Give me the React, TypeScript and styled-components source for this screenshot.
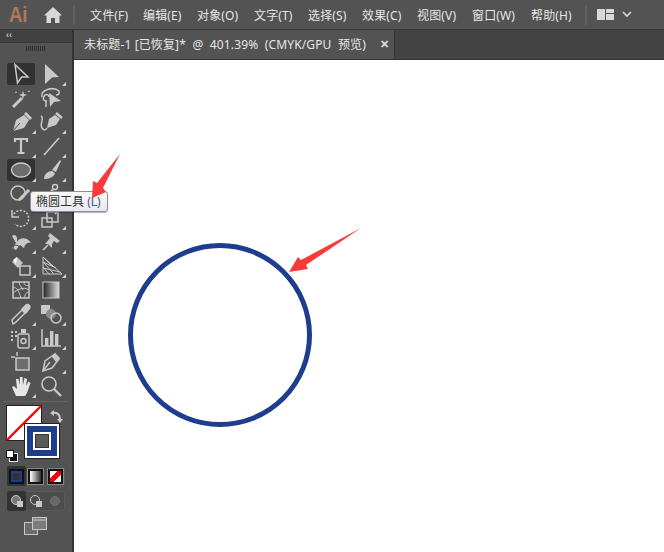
import styled, { createGlobalStyle } from "styled-components"
import { ReactNode } from "react"

const GlobalStyle = createGlobalStyle`
    html, body { margin: 0; padding: 0; background: #fff; }
    body { font-family: "Noto Sans", "Noto Sans CJK SC", "Liberation Sans", sans-serif; }
`

const Page = styled.div`
    position: relative;
    width: 664px;
    height: 552px;
    overflow: hidden;
    display: flex;
    flex-direction: column;
`

const TitleBar = styled.div`
    height: 30px;
    flex: none;
    box-sizing: border-box;
    background: #535353;
    border-bottom: 1px solid #3a3a3a;
    display: flex;
    align-items: center;
`

const Logo = styled.div`
    width: 43px;
    padding-left: 9px;
    box-sizing: border-box;
    color: #b07a58;
    font: 700 22px "Liberation Sans", sans-serif;
    transform-origin: 9px 50%;
    transform: scaleX(0.84);
`

const HomeIcon = styled.svg`
    margin-right: 10px;
`

const Divider = styled.div`
    width: 2px;
    height: 20px;
    background: #5f5f5f;
`

const MenuList = styled.div`
    display: flex;
    margin-left: 15px;
`

const MenuItem = styled.span<{ $width: number }>`
    width: ${p => p.$width}px;
    color: #e6e6e6;
    font-size: 12px;
    letter-spacing: 0.15px;
    white-space: nowrap;
`

const LayoutIcon = styled.svg`
    margin-left: 10px;
`

const ChevronIcon = styled.svg`
    margin-left: 8px;
`

const Body = styled.div`
    flex: 1;
    display: flex;
    min-height: 0;
`

const ToolPanel = styled.div`
    width: 74px;
    flex: none;
    box-sizing: border-box;
    background: #535353;
    border-right: 2px solid #333;
    display: flex;
    flex-direction: column;
`

const PanelHeader = styled.div`
    height: 13px;
    box-sizing: border-box;
    background: #414141;
    border-bottom: 1px solid #383838;
    padding-left: 6px;
    color: #c4c4c4;
    font: 700 9px/11px "Liberation Sans", sans-serif;
`

const Grip = styled.div`
    width: 19px;
    height: 5px;
    margin: 3px 0 11px 26px;
    background: repeating-linear-gradient(90deg, #2f2f2f 0 1px, #535353 1px 2px);
`

const ToolGrid = styled.div`
    display: grid;
    grid-template-columns: 30px 30px;
    grid-auto-rows: 24px;
    padding-left: 6px;
`

const Tool = styled.div<{ $active?: boolean; $corner?: boolean }>`
    position: relative;
    display: flex;
    align-items: center;
    justify-content: center;
    &::before {
        content: "";
        position: absolute;
        left: 1px;
        right: 1px;
        top: 1px;
        bottom: 1px;
        border-radius: 2px;
        background: ${p => (p.$active ? "#323232" : "transparent")};
    }
    &::after {
        content: "";
        display: ${p => (p.$corner ? "block" : "none")};
        position: absolute;
        right: 0;
        bottom: 0;
        border-style: solid;
        border-width: 0 0 4px 4px;
        border-color: transparent transparent #d0d0d0 transparent;
    }
    svg { position: relative; }
`

const PanelRule = styled.div`
    height: 1px;
    margin: 3px 4px 0;
    background: #646464;
`

const ColorArea = styled.div`
    position: relative;
    height: 56px;
    margin-top: 3px;
`

const FillSwatch = styled.div`
    position: absolute;
    left: 6px;
    top: 0;
    width: 36px;
    height: 36px;
`

const StrokeSwatch = styled.div`
    position: absolute;
    left: 25px;
    top: 19px;
    width: 30px;
    height: 30px;
    border: 2px solid #fff;
    outline: 1px solid #222;
    background: #1f3d8f;
    display: flex;
    align-items: center;
    justify-content: center;
`

const StrokeHole = styled.div`
    width: 14px;
    height: 14px;
    border: 2px solid #fff;
    box-shadow: inset 0 0 0 1px #333;
    background: #5a5a5a;
`

const SwapIcon = styled.div`
    position: absolute;
    left: 50px;
    top: 2px;
`

const DefaultIcon = styled.div`
    position: absolute;
    left: 6px;
    top: 40px;
`

const ButtonRow = styled.div<{ $top: number }>`
    display: flex;
    width: 58px;
    height: 20px;
    margin: ${p => p.$top}px 0 0 7px;
    border-radius: 3px;
    background: #4c4c4c;
    box-shadow: inset 0 0 0 1px #5a5a5a;
`

const RowCell = styled.div<{ $active?: boolean }>`
    flex: 1;
    display: flex;
    align-items: center;
    justify-content: center;
    border-radius: 2px;
    background: ${p => (p.$active ? "#333" : "transparent")};
`

const ModeSwatch = styled.div<{ $kind: "color" | "gradient" | "none" }>`
    width: 11px;
    height: 11px;
    border: 2px solid #111;
    background: ${p =>
        p.$kind === "color"
            ? "#333"
            : p.$kind === "gradient"
                ? "linear-gradient(90deg, #fff, #333)"
                : "linear-gradient(135deg, #fff 0 36%, #f00 36% 64%, #fff 64%)"};
    box-shadow: ${p => (p.$kind === "color" ? "inset 0 0 0 2px #1f3d8f" : "0 0 0 1px #888")};
`

const ScreenMode = styled.div`
    display: flex;
    justify-content: center;
    margin-top: 6px;
    margin-left: -1px;
`

const Main = styled.div`
    flex: 1;
    display: flex;
    flex-direction: column;
    min-width: 0;
`

const TabRow = styled.div`
    height: 30px;
    flex: none;
    box-sizing: border-box;
    background: #424242;
    border-bottom: 1px solid #333;
    display: flex;
`

const Tab = styled.div`
    width: 321px;
    box-sizing: border-box;
    padding: 0 0 0 10px;
    background: #535353;
    border-right: 1px solid #333;
    color: #e6e6e6;
    font-size: 12px;
    letter-spacing: 0.13px;
    line-height: 29px;
    display: flex;
    justify-content: space-between;
    white-space: pre;
`

const TabClose = styled.span`
    width: 14px;
    font: 700 11px/28px "Liberation Sans", sans-serif;
    color: #e0e0e0;
`

const Canvas = styled.div`
    position: relative;
    flex: 1;
    background: #fff;
`

const Ring = styled.div`
    position: absolute;
    left: 54px;
    top: 183px;
    width: 184px;
    height: 184px;
    box-sizing: border-box;
    border: 5px solid #1f3d8f;
    border-radius: 50%;
`

const Tooltip = styled.div`
    position: absolute;
    left: 30px;
    top: 191px;
    width: 78px;
    height: 21px;
    box-sizing: border-box;
    padding-left: 5px;
    border: 1px solid #8d8d99;
    border-radius: 3px;
    background: linear-gradient(#fafafa, #e8e8f0);
    color: #333;
    font-size: 12px;
    line-height: 19px;
    white-space: nowrap;
    box-shadow: 0 1px 1px rgba(0, 0, 0, 0.3);
`

const TooltipKey = styled.span`
    color: #44587f;
`

const Arrow = styled.svg<{ $left: number; $top: number }>`
    position: absolute;
    left: ${p => p.$left}px;
    top: ${p => p.$top}px;
`

const C = "#c9c9c9"

const line = { stroke: C, strokeWidth: 1.5, fill: "none" }

const tools: { icon: ReactNode; corner?: boolean; active?: boolean }[] = [
    { active: true, icon: <path d="M6 2.5 L19 15 L12.5 15 L8.5 21 Z" {...line} /> },
    { corner: true, icon: <path d="M6 2 L20 15 L13 15.5 L6 22 Z" fill={C} /> },
    { icon: <><path d="M4 21 L13 12" stroke={C} strokeWidth="3" /><path d="M14 5 L15 8 L18 9 L15 10 L14 13 L13 10 L10 9 L13 8 Z M7 5 L8 7 L6 7 Z M20 4 L21 6 L19 6 Z" fill={C} /></> },
    { icon: <><path d="M3 11 C1 4 14 0 20 5 C21 8 19 9 17 9 M8 15 C4 15 3 12 6 9 C8 8 10 9 10 11 M7 15 L7 21" {...line} /><path d="M10 7 L22 15 L15 16 L11 21 Z" fill={C} /></> },
    { corner: true, icon: <><path d="M4 21 L7 10 L15 5 L20 10 L15 18 Z" fill={C} /><path d="M16 3 L22 9" stroke={C} strokeWidth="3" /><path d="M4 21 L11 13" stroke="#535353" strokeWidth="1" /></> },
    { corner: true, icon: <><path d="M8 18 L10 9 L16 5 L21 9 L17 15 Z" fill={C} /><path d="M17 3 L23 8" stroke={C} strokeWidth="2.5" /><path d="M2 6 C6 8 0 14 3 18 C5 21 7 20 8 18" {...line} /></> },
    { corner: true, icon: <path d="M6 8 V5 H18 V8 M12 5 V19 M8.5 19 H15.5" stroke={C} strokeWidth="2.2" /> },
    { corner: true, icon: <path d="M5 21 L20 4" stroke={C} strokeWidth="1.6" /> },
    { corner: true, active: true, icon: <ellipse cx="12" cy="12" rx="9.5" ry="7" fill="#6d6d6d" stroke={C} strokeWidth="1.4" /> },
    { corner: true, icon: <><path d="M13 12 L21 2 L22 3 L17 14 Z" fill={C} /><path d="M5 21 C5 16 9 13 13 13 L16 15 C15 19 10 21 5 21 Z" fill={C} /></> },
    { corner: true, icon: <><circle cx="9" cy="11" r="7" {...line} /><path d="M10 18 L20 8" stroke={C} strokeWidth="3" /></> },
    { corner: true, icon: <><path d="M5 18 L14 8" stroke={C} strokeWidth="3" /><circle cx="16" cy="5" r="2.5" {...line} /></> },
    { corner: true, icon: <><path d="M5 8 A8 8 0 1 1 6 18" stroke={C} strokeWidth="1.5" strokeDasharray="2 1.5" /><path d="M3 4 L3 11 L10 11" stroke={C} strokeWidth="1.5" /></> },
    { corner: true, icon: <><rect x="3" y="12" width="10" height="9" {...line} /><rect x="8" y="6" width="11" height="10" {...line} /><path d="M16 8 L22 2 M18 2 L22 2 L22 6" {...line} /></> },
    { corner: true, icon: <><path d="M3 6 C7 3 9 8 8 12 C12 6 19 8 22 13 C18 12 16 14 15 18 L11 15 L7 20 L3 18 L7 13 Z" fill={C} /><circle cx="7" cy="18" r="3" stroke="#535353" /></> },
    { corner: true, icon: <><path d="M11 3 L21 11 L18 13 L15 11 L13 14 L13 18 L9 14 L6 14 L11 8 L9 6 Z" fill={C} /><path d="M9 15 L4 20" stroke={C} strokeWidth="1.6" /></> },
    { corner: true, icon: <><path d="M3 8 L8 3 L14 9 L9 14 Z" fill={C} /><path d="M4 6 L8 3 L7 10 Z" fill="#fff" /><rect x="11" y="12" width="10" height="9" {...line} /></> },
    { corner: true, icon: <path d="M4 3 L4 20 L23 20 L4 3 M4 8 L15 20 M4 13 L10 20 M4 3 L14 13 M4 8 L17 14 M4 14 L21 18" stroke={C} strokeWidth="1" /> },
    { icon: <><rect x="4" y="4" width="16" height="16" {...line} /><path d="M4 10 C8 8 10 14 12 20 M4 15 C8 12 14 8 20 12 M10 4 C10 8 14 10 14 12 M15 4 C15 8 18 8 20 7 M16 20 C15 16 18 14 20 14" stroke={C} strokeWidth="1" /></> },
    { icon: <><defs><linearGradient id="toolGrad"><stop offset="0" stopColor="#222" /><stop offset="1" stopColor="#ddd" /></linearGradient></defs><rect x="4" y="4" width="16" height="16" fill="url(#toolGrad)" stroke={C} /></> },
    { corner: true, icon: <><path d="M4 22 L3 18 L13 8 L16 11 L6 21 Z" {...line} /><path d="M12 7 L17 2 C20 1 23 4 21 7 L17 12 Z" fill={C} /></> },
    { corner: true, icon: <><rect x="2" y="3" width="9" height="9" fill={C} /><circle cx="12" cy="12" r="5" fill="#8a8a8a" /><circle cx="17" cy="16" r="5" {...line} /></> },
    { corner: true, icon: <><rect x="9" y="8" width="11" height="14" rx="1.5" {...line} /><circle cx="14.5" cy="15" r="2.5" {...line} /><rect x="12" y="3" width="5" height="4" fill={C} /><path d="M2 5 h2 v2 h-2z M6 5 h2 v2 h-2z M2 9 h2 v2 h-2z M6 9 h2 v2 h-2z M2 13 h2 v2 h-2z" fill={C} /></> },
    { corner: true, icon: <><path d="M3 3 L3 20 L22 20" {...line} /><rect x="6" y="12" width="3.4" height="8" fill={C} /><rect x="11" y="5" width="3.4" height="15" fill={C} /><rect x="16" y="8" width="3.4" height="12" fill={C} /></> },
    { icon: <><rect x="7" y="8" width="13" height="12" fill="#6d6d6d" stroke={C} strokeWidth="1.5" /><path d="M8 2 L8 6 M2 7 L6 7" stroke={C} strokeWidth="1.4" /></> },
    { corner: true, icon: <><path d="M4 21 L6 11 L16 4 L20 9 L13 18 Z" {...line} /><path d="M13 7 L16 3 L21 8 L17 12 Z" fill={C} /><path d="M4 21 L11 12" {...line} /></> },
    { corner: true, icon: <path d="M7 22 L3 13 L5 12 L8 15 L7 5 L9.5 5 L10.5 11 L11 3 L13.5 3 L14 11 L15.5 4 L18 5 L17 12 L19.5 7.5 L21.5 9 L18 19 L16 22 Z" fill="#e6e6e6" /> },
    { icon: <><circle cx="10" cy="10" r="7" stroke={C} strokeWidth="1.6" /><path d="M15 15 L22 22" stroke={C} strokeWidth="2.4" /></> },
]

function App(): JSX.Element {
    const menus: [string, number][] = [
        ["文件(F)", 53], ["编辑(E)", 54], ["对象(O)", 57], ["文字(T)", 54],
        ["选择(S)", 54], ["效果(C)", 55], ["视图(V)", 55], ["窗口(W)", 59], ["帮助(H)", 54],
    ]

    return (
        <Page>
            <GlobalStyle />
            <TitleBar>
                <Logo>Ai</Logo>
                <HomeIcon width="20" height="18" viewBox="0 0 20 18">
                    <path d="M10 1 L19 9.5 L16.5 9.5 L16.5 17 L12 17 L12 12 L8 12 L8 17 L3.5 17 L3.5 9.5 L1 9.5 Z" fill="#d8d8d8" />
                </HomeIcon>
                <Divider />
                <MenuList>
                    {menus.map(([label, width]) => <MenuItem key={label} $width={width}>{label}</MenuItem>)}
                </MenuList>
                <Divider />
                <LayoutIcon width="17" height="11" viewBox="0 0 17 11">
                    <path d="M0 0 H8 V11 H0 Z M9 0 H17 V4 H9 Z M9 5 H17 V11 H9 Z" fill="#d8d8d8" />
                </LayoutIcon>
                <ChevronIcon width="10" height="7" viewBox="0 0 10 7">
                    <path d="M1 1 L5 5 L9 1" stroke="#d8d8d8" strokeWidth="1.6" fill="none" />
                </ChevronIcon>
            </TitleBar>
            <Body>
                <ToolPanel>
                    <PanelHeader>‹‹</PanelHeader>
                    <Grip />
                    <ToolGrid>
                        {tools.map((t, i) => (
                            <Tool key={i} $active={t.active} $corner={t.corner}>
                                <svg width="24" height="24" viewBox="0 0 24 24" fill="none">{t.icon}</svg>
                            </Tool>
                        ))}
                    </ToolGrid>
                    <PanelRule />
                    <ColorArea>
                        <FillSwatch>
                            <svg width="36" height="36">
                                <rect x="0.5" y="0.5" width="35" height="35" fill="#fff" stroke="#222" />
                                <path d="M1 35 L35 1" stroke="#f00" strokeWidth="2.4" />
                            </svg>
                        </FillSwatch>
                        <StrokeSwatch><StrokeHole /></StrokeSwatch>
                        <SwapIcon>
                            <svg width="13" height="14" viewBox="0 0 13 14">
                                <path d="M2 3 C7 2 10 4 10 10" stroke={C} strokeWidth="2" fill="none" />
                                <path d="M4 0 L0 3 L4 6 Z M7 9 L13 9 L10 13 Z" fill={C} />
                            </svg>
                        </SwapIcon>
                        <DefaultIcon>
                            <svg width="12" height="12">
                                <rect x="3.5" y="3.5" width="8" height="8" fill="#111" stroke="#e8e8e8" />
                                <rect x="0.5" y="0.5" width="7" height="7" fill="#fff" stroke="#111" />
                            </svg>
                        </DefaultIcon>
                    </ColorArea>
                    <ButtonRow $top={5}>
                        <RowCell $active><ModeSwatch $kind="color" /></RowCell>
                        <RowCell><ModeSwatch $kind="gradient" /></RowCell>
                        <RowCell><ModeSwatch $kind="none" /></RowCell>
                    </ButtonRow>
                    <ButtonRow $top={5}>
                        <RowCell $active>
                            <svg width="14" height="14"><circle cx="6" cy="6" r="4.5" fill="#777" stroke={C} /><rect x="7" y="7" width="6" height="6" fill={C} /></svg>
                        </RowCell>
                        <RowCell>
                            <svg width="14" height="14"><circle cx="6" cy="6" r="4.5" fill="none" stroke={C} /><rect x="7" y="7" width="6" height="6" fill={C} /></svg>
                        </RowCell>
                        <RowCell>
                            <svg width="14" height="14"><circle cx="7" cy="7" r="4.5" fill="#666" stroke="#707070" /></svg>
                        </RowCell>
                    </ButtonRow>
                    <ScreenMode>
                        <svg width="23" height="18" viewBox="0 0 23 18">
                            <rect x="0.5" y="5.5" width="13" height="12" fill="#6c6c6c" stroke={C} />
                            <rect x="8.5" y="0.5" width="14" height="12" fill="#7c7c7c" stroke={C} />
                            <path d="M9 3 H22" stroke={C} />
                        </svg>
                    </ScreenMode>
                </ToolPanel>
                <Main>
                    <TabRow>
                        <Tab>
                            {"未标题-1 [已恢复]*  @  401.39%  (CMYK/GPU  预览)"}
                            <TabClose>✕</TabClose>
                        </Tab>
                    </TabRow>
                    <Canvas>
                        <Ring />
                    </Canvas>
                </Main>
            </Body>
            <Tooltip>椭圆工具 <TooltipKey>(L)</TooltipKey></Tooltip>
            <Arrow $left={90} $top={152} width="32" height="48" viewBox="90 152 32 48">
                <path d="M120 154 L97 183 L93 181 L92 198 L106 192 L103 188 Z" fill="#f93a3a" />
            </Arrow>
            <Arrow $left={287} $top={226} width="76" height="48" viewBox="287 226 76 48">
                <path d="M361 228 L301 260 L298 257 L289 272 L308 269 L306 265 Z" fill="#f93a3a" />
            </Arrow>
        </Page>
    )
}

export default App
